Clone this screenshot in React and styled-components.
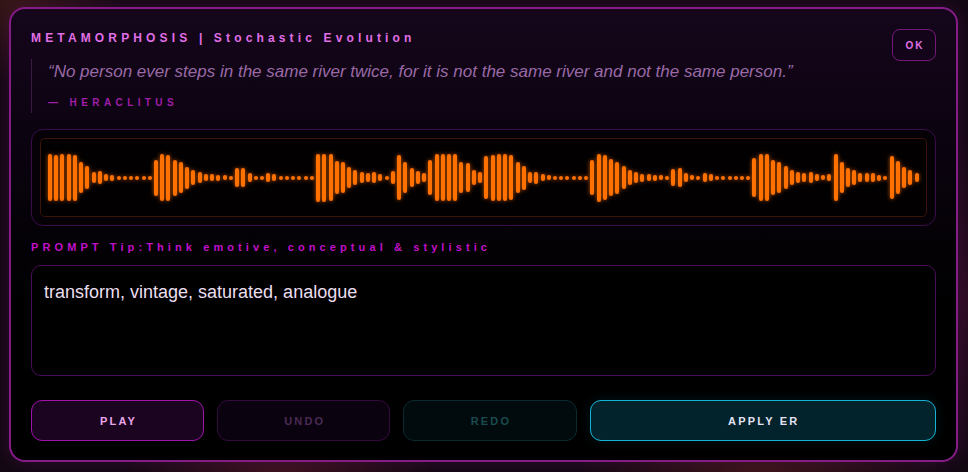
import React from "react";
import styled, { createGlobalStyle } from "styled-components";

const Global = createGlobalStyle`
  html, body { margin: 0; padding: 0; }
  body {
    width: 968px;
    height: 472px;
    overflow: hidden;
    font-family: "Liberation Sans", Arial, sans-serif;
    background:
      radial-gradient(ellipse 160px 120px at 10px 0px, rgba(120, 50, 30, 0.35), transparent 70%),
      radial-gradient(ellipse 220px 60px at 280px 472px, rgba(110, 30, 40, 0.45), transparent 70%),
      radial-gradient(ellipse 260px 60px at 760px 472px, rgba(120, 40, 30, 0.4), transparent 70%),
      radial-gradient(ellipse 80px 240px at 968px 300px, rgba(90, 20, 60, 0.35), transparent 70%),
      #120812;
  }
`;

const Page = styled.div`
  padding: 7px 10px 0 9px;
`;

const Card = styled.div`
  box-sizing: border-box;
  width: 949px;
  border: 2px solid #861c88;
  border-radius: 16px;
  padding: 20px 20px 19px 20px;
  background: linear-gradient(180deg, #15061b 0%, #0b0310 30%, #030104 55%, #000 70%);
  box-shadow: 0 0 18px rgba(140, 20, 140, 0.25);
  display: flex;
  flex-direction: column;
`;

const Header = styled.div`
  display: flex;
  justify-content: space-between;
  align-items: flex-start;
`;

const HeadText = styled.div`
  display: flex;
  flex-direction: column;
`;

const Title = styled.div`
  margin-top: 1px;
  font-size: 12px;
  line-height: 17px;
  font-weight: 700;
  letter-spacing: 4.15px;
  color: #e06ee6;
  white-space: nowrap;
`;

const Quote = styled.blockquote`
  margin: 12px 0 0 0;
  padding: 2px 0 2px 16px;
  border-left: 1px solid #3b1a44;
`;

const QuoteText = styled.div`
  font-size: 17px;
  line-height: 22px;
  font-style: italic;
  color: #9a6aa6;
  white-space: nowrap;
`;

const Author = styled.div`
  margin-top: 12px;
  font-size: 10px;
  line-height: 16px;
  font-weight: 700;
  letter-spacing: 4.4px;
  color: #a01ea8;
`;

const OkButton = styled.button`
  width: 44px;
  height: 32px;
  border: 1px solid #741878;
  border-radius: 8px;
  background: #13041a;
  color: #e070e8;
  font-family: "Liberation Sans", Arial, sans-serif;
  font-size: 10px;
  font-weight: 700;
  letter-spacing: 2px;
  padding: 0 0 0 2px;
`;

const WaveOuter = styled.div`
  margin-top: 16px;
  height: 97px;
  box-sizing: border-box;
  border: 1px solid #3a0c4c;
  border-radius: 12px;
  padding: 8px;
  background: #050106;
`;

const WaveInner = styled.div`
  height: 100%;
  box-sizing: border-box;
  border: 1px solid #3a1408;
  border-radius: 5px;
  background: #020000;
  padding: 0 7px;
  display: flex;
  align-items: center;
  justify-content: space-between;
`;

const Bar = styled.span`
  width: 4px;
  height: ${(p) => p.$h}px;
  border-radius: 2px;
  background: #ff7100;
  box-shadow: 0 0 4px rgba(255, 110, 0, 0.75);
  flex: none;
`;

const Label = styled.div`
  margin-top: 15px;
  font-size: 11px;
  line-height: 12px;
  font-weight: 700;
  letter-spacing: 4.1px;
  color: #c010c8;
  white-space: nowrap;
`;

const Prompt = styled.div`
  margin-top: 12px;
  height: 111px;
  box-sizing: border-box;
  border: 1px solid #4a0c5a;
  border-radius: 10px;
  background: #000;
  padding: 15px 12px;
  font-size: 18px;
  line-height: 22px;
  color: #ebdff0;
`;

const Actions = styled.div`
  margin-top: 24px;
  display: grid;
  grid-template-columns: 1fr 1fr 1fr 2fr;
  gap: 13px;
`;

const tones = {
  play: { bg: "#1b0420", border: "#a012aa", color: "#eaa6ea", shadow: "none" },
  undo: { bg: "#0b0210", border: "#340a3c", color: "#4a2a52", shadow: "none" },
  redo: { bg: "#010a0c", border: "#0a2a30", color: "#1a4a50", shadow: "none" },
  apply: { bg: "#02232b", border: "#12b4d6", color: "#e4e2f2", shadow: "0 0 12px rgba(0, 180, 220, 0.12)" },
};

const ActionButton = styled.button`
  height: 41px;
  box-sizing: border-box;
  border-radius: 11px;
  border: 1px solid ${(p) => tones[p.$tone].border};
  background: ${(p) => tones[p.$tone].bg};
  color: ${(p) => tones[p.$tone].color};
  box-shadow: ${(p) => tones[p.$tone].shadow};
  font-family: "Liberation Sans", Arial, sans-serif;
  font-size: 11px;
  font-weight: 700;
  letter-spacing: 2.2px;
  padding: 0 0 0 2px;
`;

const heights = [
  47, 46, 47, 47, 46, 31, 23, 11, 13, 7, 6, 4, 4, 4, 4, 4, 4, 36, 47, 46,
  36, 31, 22, 15, 11, 7, 7, 6, 5, 4, 19, 19, 9, 4, 4, 9, 7, 4, 4, 4,
  4, 4, 4, 48, 48, 47, 33, 31, 21, 15, 11, 9, 11, 7, 4, 13, 45, 31, 19, 13,
  9, 35, 47, 47, 47, 47, 31, 29, 15, 11, 43, 46, 47, 47, 45, 31, 24, 11, 12, 7,
  5, 4, 4, 4, 4, 4, 4, 35, 48, 45, 37, 32, 23, 15, 11, 8, 7, 6, 5, 4,
  17, 19, 9, 5, 4, 9, 7, 4, 4, 4, 4, 4, 4, 39, 47, 47, 35, 31, 23, 15,
  11, 9, 11, 7, 5, 7, 47, 31, 19, 15, 9, 9, 9, 6, 4, 43, 33, 21, 15, 9,
];

export default function App() {
  return (
    <>
      <Global />
      <Page>
        <Card>
          <Header>
            <HeadText>
              <Title>METAMORPHOSIS | Stochastic Evolution</Title>
              <Quote>
                <QuoteText>
                  “No person ever steps in the same river twice, for it is not the same river and not the same person.”
                </QuoteText>
                <Author>— HERACLITUS</Author>
              </Quote>
            </HeadText>
            <OkButton>OK</OkButton>
          </Header>
          <WaveOuter>
            <WaveInner>
              {heights.map((h, i) => (
                <Bar key={i} $h={h} />
              ))}
            </WaveInner>
          </WaveOuter>
          <Label>PROMPT Tip:Think emotive, conceptual &amp; stylistic</Label>
          <Prompt>transform, vintage, saturated, analogue</Prompt>
          <Actions>
            <ActionButton $tone="play">PLAY</ActionButton>
            <ActionButton $tone="undo">UNDO</ActionButton>
            <ActionButton $tone="redo">REDO</ActionButton>
            <ActionButton $tone="apply">APPLY ER</ActionButton>
          </Actions>
        </Card>
      </Page>
    </>
  );
}
